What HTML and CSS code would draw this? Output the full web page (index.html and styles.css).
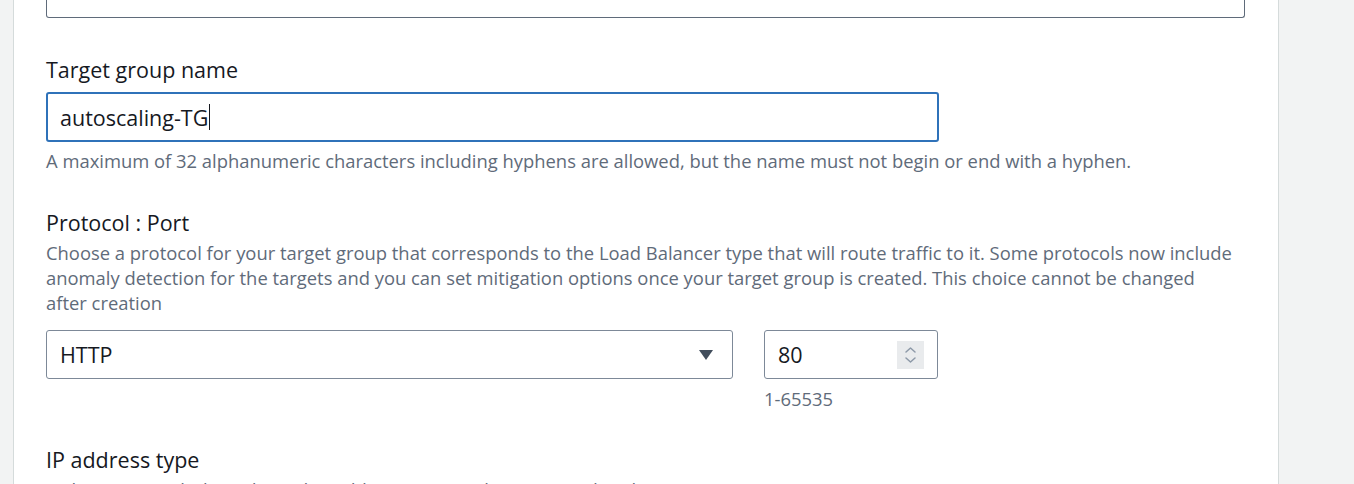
FILE: index.html
```html
<!DOCTYPE html>
<html>
<head>
<meta charset="utf-8">
<link rel="stylesheet" href="styles.css">
</head>
<body>
<div class="page">
  <div class="panel">
    <div class="prev-input"></div>

    <div class="field field-name">
      <div class="label">Target group name</div>
      <div class="input focused"><span class="value">autoscaling-TG</span><span class="caret"></span></div>
      <div class="hint">A maximum of 32 alphanumeric characters including hyphens are allowed, but the name must not begin or end with a hyphen.</div>
    </div>

    <div class="field field-proto">
      <div class="label">Protocol : Port</div>
      <div class="desc">Choose a protocol for your target group that corresponds to the Load Balancer type that will route traffic to it. Some protocols now include anomaly detection for the targets and you can set mitigation options once your target group is created. This choice cannot be changed after creation</div>
      <div class="row">
        <div class="select">
          <span class="value">HTTP</span>
          <svg class="caret-down" width="16" height="12" viewBox="0 0 16 12"><path d="M1 1 H15 L8 11 Z" fill="#414d5c"/></svg>
        </div>
        <div class="port">
          <div class="input number"><span class="value">80</span>
            <span class="spin">
              <svg width="27" height="28" viewBox="0 0 27 28"><path d="M9 11 L13.5 7 L18 11" fill="none" stroke="#8d99a8" stroke-width="1.5" stroke-linecap="round" stroke-linejoin="round"/><path d="M9 17 L13.5 21 L18 17" fill="none" stroke="#8d99a8" stroke-width="1.5" stroke-linecap="round" stroke-linejoin="round"/></svg>
            </span>
          </div>
          <div class="hint port-hint">1-65535</div>
        </div>
      </div>
    </div>

    <div class="field field-ip">
      <div class="label">IP address type</div>
      <div class="desc">Only targets with the indicated IP address type can be registered to this target group.</div>
    </div>
  </div>
</div>
</body>
</html>
```

FILE: styles.css
```css
html, body {
  margin: 0;
  padding: 0;
  background: #f2f3f3;
  height: 100%;
  overflow: hidden;
}
body {
  font-family: "Open Sans", "Noto Sans", sans-serif;
  color: #16191f;
}
.page {
  padding-left: 13px;
  height: 100%;
}
.panel {
  width: 1232px;
  height: 100%;
  background: #ffffff;
  border-left: 1px solid #d5dbdb;
  border-right: 1px solid #d5dbdb;
  padding-left: 32px;
  box-sizing: content-box;
}
.prev-input {
  width: 1197px;
  height: 17px;
  border: 1px solid #5f6b7a;
  border-top: none;
  border-radius: 0 0 3px 3px;
}
.label {
  font-size: 21.5px;
  line-height: 28px;
  color: #16191f;
}
.field-name {
  padding-top: 38px;
}
.field-name .label {
  margin-bottom: 8px;
}
.input {
  box-sizing: border-box;
  border: 1px solid #7d8998;
  border-radius: 3px;
  height: 49px;
  display: flex;
  align-items: center;
  padding-left: 13px;
  font-size: 21.5px;
}
.input.focused {
  width: 893px;
  height: 50px;
  border: 2px solid #2f72b9;
  padding-left: 12px;
}
.caret {
  display: inline-block;
  width: 1px;
  height: 26px;
  background: #16191f;
  margin-left: 1px;
}
.hint {
  font-size: 18.4px;
  line-height: 24px;
  color: #5f6b7a;
}
.field-name .hint {
  margin-top: 7px;
}
.field-proto {
  padding-top: 36px;
}
.field-proto .label {
  margin-bottom: 3px;
}
.desc {
  font-size: 18.4px;
  line-height: 25px;
  color: #5f6b7a;
  max-width: 1190px;
}
.row {
  display: flex;
  gap: 31px;
  margin-top: 15px;
}
.select {
  box-sizing: border-box;
  width: 687px;
  height: 49px;
  border: 1px solid #7d8998;
  border-radius: 3px;
  display: flex;
  align-items: center;
  justify-content: space-between;
  padding: 0 18px 0 13px;
  font-size: 21.5px;
}
.port {
  display: flex;
  flex-direction: column;
}
.input.number {
  width: 174px;
  justify-content: space-between;
  padding-right: 13px;
}
.spin {
  display: block;
  width: 27px;
  height: 28px;
  background: #e9ebed;
}
.spin svg {
  display: block;
}
.port-hint {
  margin-top: 8px;
}
.field-ip {
  padding-top: 35px;
}
.field-ip .label {
  margin-bottom: 3px;
}
```
